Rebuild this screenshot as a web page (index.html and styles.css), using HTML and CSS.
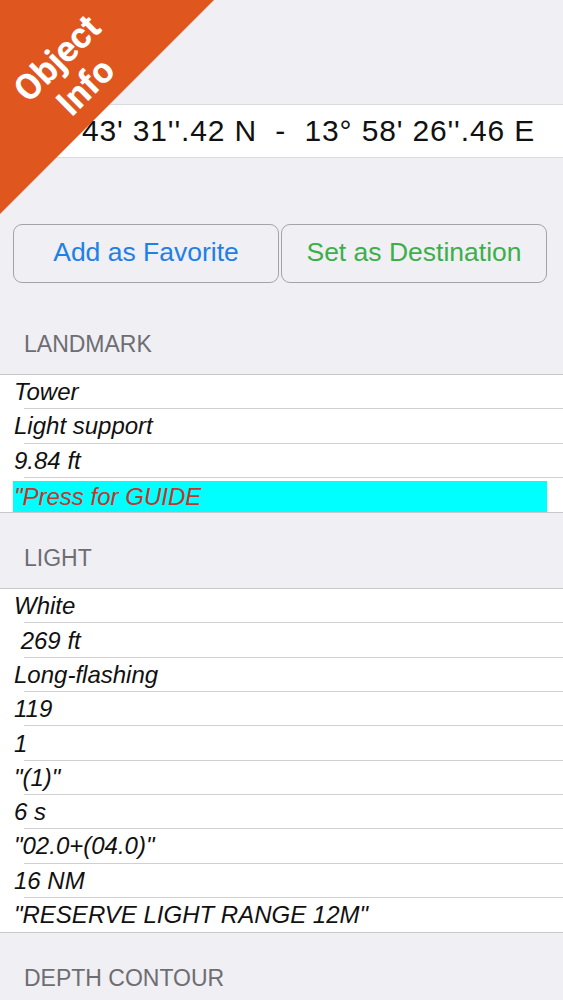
FILE: index.html
```html
<!DOCTYPE html>
<html lang="en">
<head>
<meta charset="utf-8">
<title>Object Info</title>
<link rel="stylesheet" href="styles.css">
</head>
<body>
<div class="page">
  <div class="ribbon">
    <svg class="ribbon-bg" width="214" height="214" viewBox="0 0 214 214"><polygon points="0,0 214,0 0,214" fill="#e0561f"/></svg>
    <div class="ribbon-text">Object<br>Info</div>
  </div>

  <div class="coords">43' 31''.42 N  -  13° 58' 26''.46 E</div>

  <div class="actions">
    <button class="btn btn-fav">Add as Favorite</button>
    <button class="btn btn-dest">Set as Destination</button>
  </div>

  <div class="section-header first">LANDMARK</div>
  <div class="list">
    <div class="row">Tower</div>
    <div class="row">Light support</div>
    <div class="row">9.84 ft</div>
    <div class="row row-guide"><span class="guide">"Press for GUIDE</span></div>
  </div>

  <div class="section-header">LIGHT</div>
  <div class="list">
    <div class="row">White</div>
    <div class="row">&nbsp;269 ft</div>
    <div class="row">Long-flashing</div>
    <div class="row">119</div>
    <div class="row">1</div>
    <div class="row">"(1)"</div>
    <div class="row">6 s</div>
    <div class="row">"02.0+(04.0)"</div>
    <div class="row">16 NM</div>
    <div class="row">"RESERVE LIGHT RANGE 12M"</div>
  </div>

  <div class="section-header">DEPTH CONTOUR</div>
</div>
</body>
</html>
```

FILE: styles.css
```css
html, body {
  margin: 0;
  padding: 0;
  background: #efeff4;
}

body {
  font-family: "Liberation Sans", Arial, sans-serif;
  color: #111;
}

.page {
  position: relative;
  width: 563px;
  min-height: 1000px;
  overflow: hidden;
  padding-top: 104px;
  box-sizing: border-box;
}

/* corner ribbon overlay */
.ribbon {
  position: absolute;
  left: 0;
  top: 0;
  width: 214px;
  height: 214px;
  z-index: 5;
  pointer-events: none;
}

.ribbon-bg {
  display: block;
}

.ribbon-text {
  position: absolute;
  left: -27px;
  top: 32px;
  width: 200px;
  height: 84px;
  transform: rotate(-45deg);
  transform-origin: 50% 50%;
  color: #fff;
  font-family: Roboto, "Liberation Sans", sans-serif;
  font-weight: 700;
  font-size: 36px;
  line-height: 40px;
  text-align: center;
}

/* coordinates */
.coords {
  height: 52px;
  background: #fff;
  border-top: 1px solid #d9d9de;
  border-bottom: 1px solid #d9d9de;
  display: flex;
  align-items: center;
  justify-content: flex-end;
  padding-right: 28px;
  white-space: pre;
  font-size: 30px;
  letter-spacing: 0.85px;
  color: #111;
}

/* buttons */
.actions {
  display: grid;
  grid-template-columns: 266px 266px;
  gap: 2px;
  padding-left: 13px;
  margin-top: 66px;
}

.btn {
  height: 59px;
  border: 1px solid #a3a3a8;
  border-radius: 9px;
  background: transparent;
  font-family: "Liberation Sans", Arial, sans-serif;
  font-size: 26.5px;
  padding: 0 0 2px;
}

.btn-fav {
  color: #2180e6;
}

.btn-dest {
  color: #3daf4a;
}

/* section headers */
.section-header {
  height: 75px;
  box-sizing: border-box;
  display: flex;
  align-items: flex-end;
  padding: 0 24px 17px;
  font-size: 23px;
  line-height: 26px;
  color: #6d6d72;
}

.section-header.first {
  height: 91px;
}

/* lists */
.list {
  background: #fff;
  border-top: 1px solid #c8c7cc;
  border-bottom: 1px solid #c8c7cc;
}

.row {
  height: 34.3px;
  box-sizing: border-box;
  display: flex;
  align-items: center;
  padding-left: 14px;
  font-style: italic;
  font-size: 24px;
  color: #111;
  white-space: pre;
  background: linear-gradient(#d0d0d4, #d0d0d4) no-repeat 24px 100% / calc(100% - 24px) 1px;
}

.row:last-child {
  background: none;
}

.row-guide {
  align-items: stretch;
  padding: 3px 16px 0 13px;
}

.guide {
  flex: 1;
  display: flex;
  align-items: center;
  padding-left: 1px;
  background: #00ffff;
  color: #c8332a;
}
```
